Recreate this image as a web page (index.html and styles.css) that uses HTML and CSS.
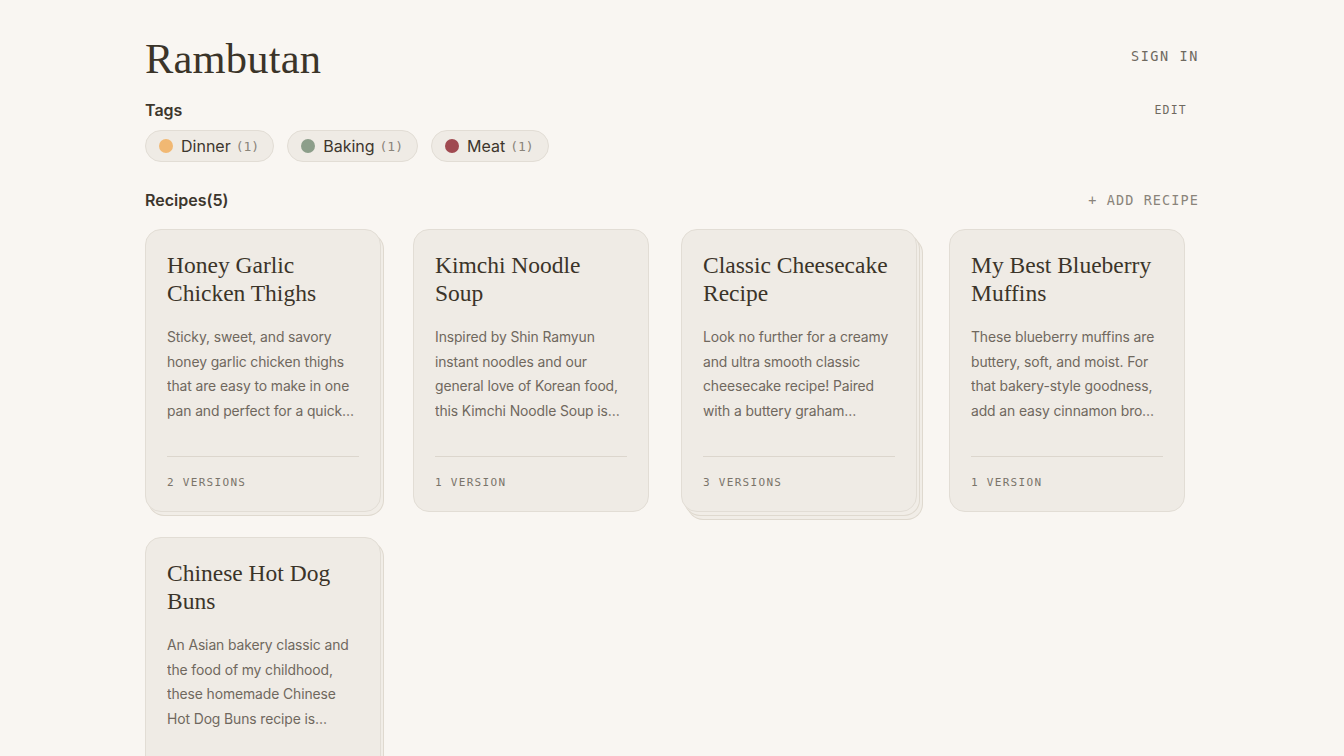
FILE: index.html
```html
<!DOCTYPE html>
<html lang="en">
<head>
    <meta charset="UTF-8">
    <meta name="viewport" content="width=device-width, initial-scale=1.0">
    <title>Rambutan</title>
    <link rel="stylesheet" href="styles.css">
</head>
<body>
    <main class="page">
        <!-- Header -->
        <header class="header">
            <h1 class="brand">Rambutan</h1>
            <a class="mono-link sign-in" href="#">Sign in</a>
        </header>

        <!-- Tags -->
        <section class="tags">
            <div class="section-head">
                <h2 class="section-title">Tags</h2>
                <a class="mono-link edit-link" href="#">Edit</a>
            </div>
            <div class="tag-list">
                <span class="tag"><span class="tag-dot dot-dinner"></span>Dinner <span class="tag-count">(1)</span></span>
                <span class="tag"><span class="tag-dot dot-baking"></span>Baking <span class="tag-count">(1)</span></span>
                <span class="tag"><span class="tag-dot dot-meat"></span>Meat <span class="tag-count">(1)</span></span>
            </div>
        </section>

        <!-- Recipes -->
        <section class="recipes">
            <div class="section-head">
                <h2 class="section-title">Recipes(5)</h2>
                <a class="mono-link add-link" href="#">+ Add recipe</a>
            </div>

            <div class="recipe-grid">
                <article class="recipe-card stack-2">
                    <h3 class="recipe-title">Honey Garlic Chicken Thighs</h3>
                    <p class="recipe-desc">Sticky, sweet, and savory honey garlic chicken thighs that are easy to make in one pan and perfect for a quick weeknight dinner.</p>
                    <div class="recipe-meta">2 versions</div>
                </article>

                <article class="recipe-card">
                    <h3 class="recipe-title">Kimchi Noodle Soup</h3>
                    <p class="recipe-desc">Inspired by Shin Ramyun instant noodles and our general love of Korean food, this Kimchi Noodle Soup is spicy and comforting.</p>
                    <div class="recipe-meta">1 version</div>
                </article>

                <article class="recipe-card stack-3">
                    <h3 class="recipe-title">Classic Cheesecake Recipe</h3>
                    <p class="recipe-desc">Look no further for a creamy and ultra smooth classic cheesecake recipe! Paired with a buttery graham cracker crust.</p>
                    <div class="recipe-meta">3 versions</div>
                </article>

                <article class="recipe-card">
                    <h3 class="recipe-title">My Best Blueberry Muffins</h3>
                    <p class="recipe-desc">These blueberry muffins are buttery, soft, and moist. For that bakery-style goodness, add an easy cinnamon brown sugar topping.</p>
                    <div class="recipe-meta">1 version</div>
                </article>

                <article class="recipe-card stack-2">
                    <h3 class="recipe-title">Chinese Hot Dog Buns</h3>
                    <p class="recipe-desc">An Asian bakery classic and the food of my childhood, these homemade Chinese Hot Dog Buns recipe is incredibly soft and fluffy.</p>
                    <div class="recipe-meta">2 versions</div>
                </article>
            </div>
        </section>
    </main>
</body>
</html>
```

FILE: styles.css
```css
/* Base Styles */
body {
    font-family: 'Inter', 'Noto Sans', sans-serif;
    margin: 0;
    padding: 0;
    background-color: #f9f6f2;
    color: #3d362d;
}

.page {
    width: 1054px;
    margin: 0 auto;
    padding-top: 32px;
}

/* Header */
.header {
    display: flex;
    align-items: center;
    justify-content: space-between;
    height: 52px;
}

.brand {
    font-family: 'Liberation Serif', serif;
    font-weight: 400;
    font-size: 42.5px;
    margin: 0;
    color: #3b3429;
    letter-spacing: 0.2px;
}

.mono-link {
    font-family: 'DejaVu Sans Mono', monospace;
    text-transform: uppercase;
    text-decoration: none;
    color: #6f695f;
    letter-spacing: 1.6px;
}

.sign-in {
    font-size: 13.5px;
    margin-top: -4px;
}

/* Section headings */
.section-head {
    display: flex;
    align-items: center;
    justify-content: space-between;
}

.section-title {
    margin: 0;
    font-size: 16px;
    font-weight: 600;
    color: #3d362d;
}

/* Tags */
.tags {
    margin-top: 16px;
}

.edit-link {
    font-size: 11.5px;
    margin-right: 12px;
    letter-spacing: 1.2px;
}

.tag-list {
    display: flex;
    gap: 13px;
    margin-top: 10px;
}

.tag {
    display: inline-flex;
    align-items: center;
    height: 30px;
    padding: 0 14px 0 13px;
    border: 1px solid #e2ddd5;
    border-radius: 16px;
    background-color: #efebe5;
    font-size: 16px;
    color: #3d362d;
}

.tag-dot {
    width: 14px;
    height: 14px;
    border-radius: 50%;
    margin-right: 8px;
}

.dot-dinner { background-color: #f1b873; }
.dot-baking { background-color: #8c9e8a; }
.dot-meat { background-color: #a04a51; }

.tag-count {
    font-family: 'DejaVu Sans Mono', monospace;
    font-size: 13px;
    color: #8a847a;
    margin-left: 5px;
}

/* Recipes */
.recipes {
    margin-top: 28px;
}

.add-link {
    font-size: 13.5px;
    letter-spacing: 1.1px;
    color: #8a847a;
}

.recipe-grid {
    display: grid;
    grid-template-columns: repeat(4, 236px);
    column-gap: 32px;
    row-gap: 25px;
    margin-top: 19px;
}

.recipe-card {
    height: 283px;
    box-sizing: border-box;
    padding: 21px 21px 0;
    background-color: #efebe5;
    border: 1px solid #e2ddd5;
    border-radius: 16px;
    display: flex;
    flex-direction: column;
}

/* Stacked sheets behind cards with more than one version */
.stack-2 {
    box-shadow: 3px 4px 0 -1px #f1ede7, 3px 4px 0 0 #dfd9cf;
}

.stack-3 {
    box-shadow: 3px 4px 0 -1px #f1ede7, 3px 4px 0 0 #dfd9cf,
                6px 8px 0 -1px #f1ede7, 6px 8px 0 0 #dfd9cf;
}

.recipe-title {
    font-family: 'Liberation Serif', serif;
    font-weight: 400;
    font-size: 23.5px;
    line-height: 28px;
    margin: 0;
    color: #3b3429;
}

.recipe-desc {
    margin: 18px 0 0;
    font-size: 13.9px;
    letter-spacing: -0.1px;
    line-height: 24.7px;
    color: #6f685e;
    display: -webkit-box;
    -webkit-line-clamp: 4;
    -webkit-box-orient: vertical;
    overflow: hidden;
    height: 99px;
}

.recipe-meta {
    margin-top: auto;
    margin-bottom: 22px;
    padding-top: 19px;
    border-top: 1px solid #dcd6cd;
    font-family: 'DejaVu Sans Mono', monospace;
    font-size: 11px;
    letter-spacing: 1.3px;
    text-transform: uppercase;
    color: #7a746a;
}
```
